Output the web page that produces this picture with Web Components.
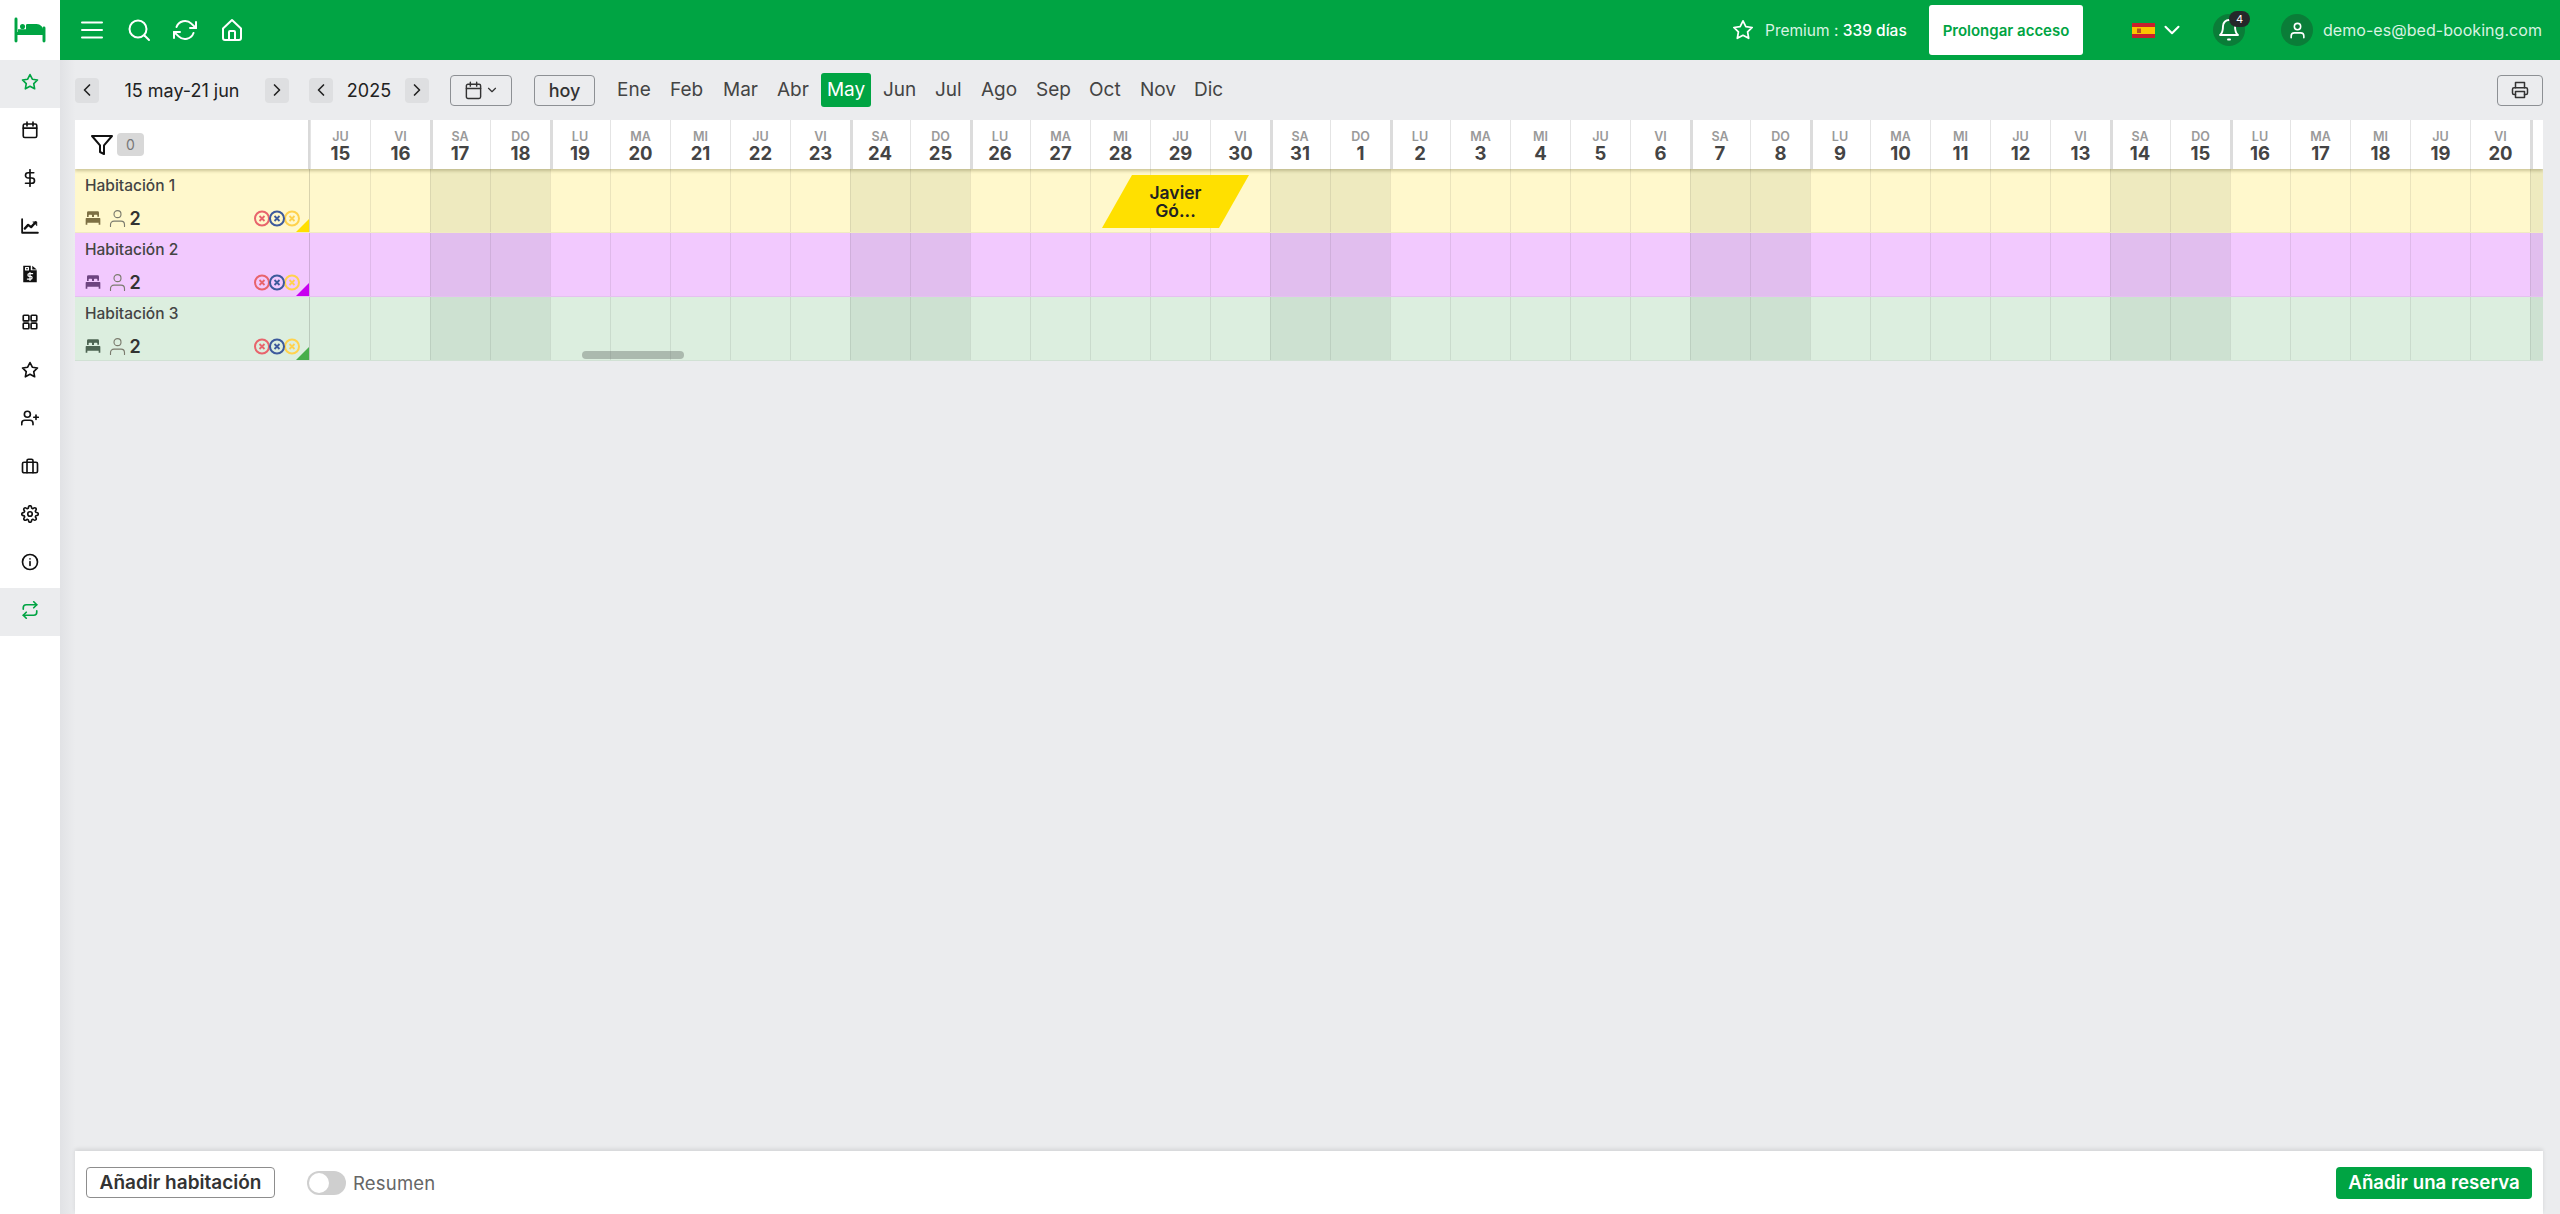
<!DOCTYPE html>
<html lang="es">
<head>
<meta charset="utf-8">
<title>Calendario</title>
<style>
  html, body { margin: 0; height: 100%; overflow: hidden; }
  body { font-family: Inter, "Liberation Sans", sans-serif; color: #222; background: #ebecee; }
</style>
</head>
<body>
<app-shell>
  <side-nav slot="side"></side-nav>
  <top-bar slot="top"></top-bar>
  <cal-toolbar></cal-toolbar>
  <room-grid>
    <room-row name="Habitación 1" color="#fff8cc" bed="#7d7044" mark="#ffdf00">
      <booking-chip left="792" width="147" line1="Javier" line2="Gó..."></booking-chip>
    </room-row>
    <room-row name="Habitación 2" color="#f2c9fe" bed="#6d4480" mark="#c800f0"></room-row>
    <room-row name="Habitación 3" color="#dceedf" bed="#4e6553" mark="#47ae4b"></room-row>
  </room-grid>
  <foot-bar></foot-bar>
</app-shell>

<script>
const ICONS = {
  menu: '<path d="M2 4.5h20M2 12h20M2 19.5h20"/>',
  search: '<circle cx="11" cy="11" r="8.5"/><path d="M17.5 17.5 22 22"/>',
  refresh: '<path d="M23 4v6h-6M1 20v-6h6"/><path d="M3.51 9a9 9 0 0 1 14.85-3.36L23 10M1 14l4.64 4.36A9 9 0 0 0 20.49 15"/>',
  home: '<path d="M3 10.5 12 2l9 8.5V20a2 2 0 0 1-2 2H5a2 2 0 0 1-2-2z"/><path d="M9 22v-8a1 1 0 0 1 1-1h4a1 1 0 0 1 1 1v8"/>',
  star: '<polygon points="12 2 15.09 8.26 22 9.27 17 14.14 18.18 21.02 12 17.77 5.82 21.02 7 14.14 2 9.27 8.91 8.26"/>',
  calendar: '<rect x="3" y="4" width="18" height="18" rx="2"/><path d="M8 1.5v5M16 1.5v5M3 9.5h18"/>',
  dollar: '<path d="M12 1v22M17 5H9.5a3.5 3.5 0 0 0 0 7h5a3.5 3.5 0 0 1 0 7H6"/>',
  chart: '<path d="M1.5 3v18h21" stroke-width="2.4"/><path d="M5 15.5l4.5-5 4 3 6-6.5" stroke-width="3"/><path d="M16 6.5h5v5" fill="currentColor" stroke-width="1"/>',
  grid: '<rect x="3" y="3" width="7.5" height="7.5" rx="1"/><rect x="13.5" y="3" width="7.5" height="7.5" rx="1"/><rect x="3" y="13.5" width="7.5" height="7.5" rx="1"/><rect x="13.5" y="13.5" width="7.5" height="7.5" rx="1"/>',
  userplus: '<path d="M16 21v-2a4 4 0 0 0-4-4H5a4 4 0 0 0-4 4v2"/><circle cx="8.5" cy="7" r="4"/><path d="M20 8v6M17 11h6"/>',
  briefcase: '<rect x="2" y="7" width="20" height="14" rx="2"/><path d="M8 21V5a2 2 0 0 1 2-2h4a2 2 0 0 1 2 2v16"/>',
  gear: '<circle cx="12" cy="12" r="3"/><path d="M19.4 15a1.65 1.65 0 0 0 .33 1.82l.06.06a2 2 0 0 1 0 2.83 2 2 0 0 1-2.83 0l-.06-.06a1.65 1.65 0 0 0-1.82-.33 1.65 1.65 0 0 0-1 1.51V21a2 2 0 0 1-2 2 2 2 0 0 1-2-2v-.09A1.65 1.65 0 0 0 9 19.4a1.65 1.65 0 0 0-1.82.33l-.06.06a2 2 0 0 1-2.83 0 2 2 0 0 1 0-2.83l.06-.06a1.65 1.65 0 0 0 .33-1.82 1.65 1.65 0 0 0-1.51-1H3a2 2 0 0 1-2-2 2 2 0 0 1 2-2h.09A1.65 1.65 0 0 0 4.6 9a1.65 1.65 0 0 0-.33-1.82l-.06-.06a2 2 0 0 1 0-2.83 2 2 0 0 1 2.83 0l.06.06a1.65 1.65 0 0 0 1.82.33H9a1.65 1.65 0 0 0 1-1.51V3a2 2 0 0 1 2-2 2 2 0 0 1 2 2v.09a1.65 1.65 0 0 0 1 1.51 1.65 1.65 0 0 0 1.82-.33l.06-.06a2 2 0 0 1 2.83 0 2 2 0 0 1 0 2.83l-.06.06a1.65 1.65 0 0 0-.33 1.82V9a1.65 1.65 0 0 0 1.51 1H21a2 2 0 0 1 2 2 2 2 0 0 1-2 2h-.09a1.65 1.65 0 0 0-1.51 1z"/>',
  info: '<circle cx="12" cy="12" r="10"/><path d="M12 16.5v-5M12 8v-.1"/>',
  repeat: '<path d="M17 1l4 4-4 4"/><path d="M3 11V9a4 4 0 0 1 4-4h14"/><path d="M7 23l-4-4 4-4"/><path d="M21 13v2a4 4 0 0 1-4 4H3"/>',
  bell: '<path d="M18 8A6 6 0 0 0 6 8c0 7-3 9-3 9h18s-3-2-3-9"/><path d="M11 21.5h2"/>',
  user: '<path d="M20 21v-2a4 4 0 0 0-4-4H8a4 4 0 0 0-4 4v2"/><circle cx="12" cy="7" r="4"/>',
  filter: '<polygon points="22 3 2 3 10 12.46 10 19 14 21 14 12.46 22 3"/>',
  printer: '<path d="M6 9V2h12v7"/><path d="M6 18H4a2 2 0 0 1-2-2v-5a2 2 0 0 1 2-2h16a2 2 0 0 1 2 2v5a2 2 0 0 1-2 2h-2"/><rect x="6" y="14" width="12" height="8"/>',
  left: '<path d="M15 18l-6-6 6-6"/>',
  right: '<path d="M9 18l6-6-6-6"/>',
  down: '<path d="M6 9l6 6 6-6"/>',
  bed: '<path fill="currentColor" stroke="none" d="M5 2h14a2 2 0 0 1 2 2v6h-2.5V8a1 1 0 0 0-1-1h-3a1 1 0 0 0-1 1v2.5h-3V8a1 1 0 0 0-1-1H6.5a1 1 0 0 0-1 1v2.5H3V4a2 2 0 0 1 2-2zM2 12h20a1 1 0 0 1 1 1v9h-2.5v-3h-17v3H1v-9a1 1 0 0 1 1-1z"/>',
  invoice: '<path fill="currentColor" stroke="none" d="M3 1h10v6h8v16H3zM15 1l6 5h-6z"/><path stroke="#fff" stroke-width="1.6" d="M15.5 11.5H11a1.8 1.8 0 0 0 0 3.6h2a1.8 1.8 0 0 1 0 3.6H8.5M12 10v10.5"/><path stroke="#fff" stroke-width="1.4" d="M6 3.5h4v3H6z"/>',
  logo: '<path d="M1.5 3.75v16.5M1.5 14.6h21M22.5 10.5v9.75" stroke-width="2.2"/><circle cx="6.4" cy="9.4" r="1.9" fill="currentColor" stroke="none"/><path d="M9 8.5a1 1 0 0 1 1-1h7a5 5 0 0 1 5 5v2H3v-3h6z" fill="currentColor" stroke="none"/>'
};

class UiIcon extends HTMLElement {
  connectedCallback() {
    const size = this.getAttribute('size') || 24;
    const sw = this.getAttribute('stroke') || 2;
    this.attachShadow({ mode: 'open' }).innerHTML = `
      <style>:host { display: inline-flex; flex: none; line-height: 0; }</style>
      <svg width="${size}" height="${size}" viewBox="0 0 24 24" fill="none" stroke="currentColor"
        stroke-width="${sw}" stroke-linecap="round" stroke-linejoin="round">${ICONS[this.getAttribute('name')]}</svg>`;
  }
}
customElements.define('ui-icon', UiIcon);

class AppShell extends HTMLElement {
  constructor() {
    super();
    this.attachShadow({ mode: 'open' }).innerHTML = `
      <style>
        :host { display: flex; height: 1214px; width: 2560px; }
        .col { flex: 1; min-width: 0; display: flex; flex-direction: column; }
        .content {
          flex: 1; min-height: 0; display: flex; flex-direction: column;
          padding: 0 17px 0 15px;
          background: linear-gradient(to right, #e1e2e5, #ebecee 15px);
        }
        ::slotted(foot-bar) { margin-top: auto; }
      </style>
      <slot name="side"></slot>
      <div class="col">
        <slot name="top"></slot>
        <div class="content"><slot></slot></div>
      </div>`;
  }
}
customElements.define('app-shell', AppShell);

class SideNav extends HTMLElement {
  constructor() {
    super();
    const items = ['star:on', 'calendar', 'dollar', 'chart', 'invoice', 'grid', 'star', 'userplus', 'briefcase', 'gear', 'info', 'repeat:on'];
    const rows = items.map(it => {
      const [name, on] = it.split(':');
      return `<div class="item ${on ? 'on' : ''}"><ui-icon name="${name}" size="18" stroke="2.2"></ui-icon></div>`;
    }).join('');
    this.attachShadow({ mode: 'open' }).innerHTML = `
      <style>
        :host { display: block; width: 60px; flex: none; background: #fff; }
        .logo { height: 60px; display: flex; align-items: center; justify-content: center; color: #00a443; }
        .item { height: 48px; box-sizing: border-box; padding-bottom: 4px; display: flex; align-items: center; justify-content: center; color: #111; }
        .item.on { background: #ebecee; color: #00a443; }
      </style>
      <div class="logo"><ui-icon name="logo" size="32" stroke="2"></ui-icon></div>
      ${rows}`;
  }
}
customElements.define('side-nav', SideNav);

class TopBar extends HTMLElement {
  constructor() {
    super();
    this.attachShadow({ mode: 'open' }).innerHTML = `
      <style>
        :host { display: flex; align-items: center; height: 60px; flex: none; background: #00a443; color: #fff; padding: 0 24px 0 20px; font-size: 16px; }
        .tools { display: flex; gap: 22.5px; }
        .right { margin-left: auto; display: flex; align-items: center; }
        .premium { margin-left: 11px; width: 145px; white-space: nowrap; color: #d8f3e2; font-size: 15.5px; }
        .premium b { font-weight: 500; color: #fff; }
        .extend {
          margin-left: 19px; width: 154px; height: 50px; box-sizing: border-box; display: flex; align-items: center; justify-content: center;
          background: #fff; color: #00a443; border-radius: 3px; font-weight: 600; font-size: 15px; white-space: nowrap;
        }
        .flag { margin-left: 49px; display: block; }
        .chev { margin-left: 4px; }
        .round { position: relative; width: 32px; height: 32px; border-radius: 50%; background: #0a7d38; display: flex; align-items: center; justify-content: center; }
        .bell { margin-left: 28px; }
        .badge {
          position: absolute; left: 16px; top: -3px; width: 21px; height: 16px; border-radius: 8px; background: #25282a;
          color: #fff; font-size: 11px; line-height: 16px; text-align: center;
        }
        .user { margin-left: 36px; }
        .mail { margin-left: 10px; width: 213px; white-space: nowrap; color: #d8f3e2; letter-spacing: .05px; }
      </style>
      <div class="tools">
        <ui-icon name="menu" size="24" stroke="2"></ui-icon>
        <ui-icon name="search" size="24" stroke="2"></ui-icon>
        <ui-icon name="refresh" size="24" stroke="2"></ui-icon>
        <ui-icon name="home" size="24" stroke="2"></ui-icon>
      </div>
      <div class="right">
        <ui-icon name="star" size="22" stroke="1.9"></ui-icon>
        <span class="premium">Premium : <b>339 días</b></span>
        <div class="extend">Prolongar acceso</div>
        <svg class="flag" width="23" height="15" viewBox="0 0 23 15">
          <rect width="23" height="15" fill="#c8202c"/><rect y="4" width="23" height="7" fill="#fbc400"/>
          <rect x="5" y="5.5" width="4" height="4.5" fill="#b5541c"/>
        </svg>
        <ui-icon class="chev" name="down" size="26" stroke="1.9"></ui-icon>
        <div class="round bell">
          <ui-icon name="bell" size="24" stroke="1.9"></ui-icon>
          <span class="badge">4</span>
        </div>
        <div class="round user"><ui-icon name="user" size="19" stroke="2"></ui-icon></div>
        <span class="mail">demo-es@bed-booking.com</span>
      </div>`;
  }
}
customElements.define('top-bar', TopBar);

class CalToolbar extends HTMLElement {
  constructor() {
    super();
    const months = [['Ene', 53], ['Feb', 53], ['Mar', 54], ['Abr', 51], ['May', 50], ['Jun', 52], ['Jul', 46], ['Ago', 55], ['Sep', 53], ['Oct', 51], ['Nov', 54], ['Dic', 43]];
    const tabs = months.map(([m, w]) => `<span class="m ${m === 'May' ? 'on' : ''}" style="width:${w}px">${m}</span>`).join('');
    this.attachShadow({ mode: 'open' }).innerHTML = `
      <style>
        :host { display: flex; align-items: center; height: 60px; flex: none; font-size: 18px; color: #222; }
        .step { width: 24px; height: 25px; border-radius: 4px; background: #dedfe1; display: flex; align-items: center; justify-content: center; color: #222; }
        .label { text-align: center; white-space: nowrap; }
        .range { width: 166px; }
        .year { width: 72px; }
        .outline {
          height: 31px; box-sizing: border-box; border: 1px solid #8d9094; border-radius: 4px; display: flex; align-items: center; justify-content: center; color: #333;
        }
        .cal { width: 62px; margin-left: 21px; gap: 2px; }
        .hoy { width: 61px; margin-left: 22px; font-weight: 500; font-size: 18px; }
        .months { display: flex; align-items: center; margin-left: 15px; color: #444; font-size: 19px; }
        .m { height: 34px; line-height: 34px; padding-left: 7px; box-sizing: border-box; flex: none; border-radius: 3px; }
        .m.on { background: #00a443; color: #fff; margin: 0 5px 0 0; padding-left: 0; text-align: center; }
        .print { width: 46px; margin-left: auto; }
        .gap { width: 20px; }
      </style>
      <span class="step"><ui-icon name="left" size="20" stroke="2"></ui-icon></span>
      <span class="label range">15 may-21 jun</span>
      <span class="step"><ui-icon name="right" size="20" stroke="2"></ui-icon></span>
      <span class="gap"></span>
      <span class="step"><ui-icon name="left" size="20" stroke="2"></ui-icon></span>
      <span class="label year">2025</span>
      <span class="step"><ui-icon name="right" size="20" stroke="2"></ui-icon></span>
      <div class="outline cal"><ui-icon name="calendar" size="19" stroke="1.8"></ui-icon><ui-icon name="down" size="14" stroke="2"></ui-icon></div>
      <div class="outline hoy">hoy</div>
      <div class="months">${tabs}</div>
      <div class="outline print"><ui-icon name="printer" size="18" stroke="2"></ui-icon></div>`;
  }
}
customElements.define('cal-toolbar', CalToolbar);

const DAY_COUNT = 38; // 15 may to 21 jun, only a sliver of the last one shows at the grid edge
const DAY_NAMES = ['DO', 'LU', 'MA', 'MI', 'JU', 'VI', 'SA'];
function dayInfo(i) {
  const d = new Date(2025, 4, 15 + i);
  const dow = d.getDay();
  return { name: DAY_NAMES[dow], num: d.getDate(), weekend: dow === 0 || dow === 6, sat: dow === 6, mon: dow === 1 };
}

class RoomGrid extends HTMLElement {
  constructor() {
    super();
    let heads = '';
    for (let i = 0; i < DAY_COUNT; i++) {
      const d = dayInfo(i);
      const labels = i < DAY_COUNT - 1 ? `<span class="n">${d.name}</span><span class="d">${d.num}</span>` : '';
      heads += `<div class="day ${d.sat || d.mon ? 'thick' : ''}">${labels}</div>`;
    }
    this.attachShadow({ mode: 'open' }).innerHTML = `
      <style>
        :host { display: block; position: relative; flex: none; overflow: hidden; }
        .head { display: flex; height: 49px; background: #fff; position: relative; z-index: 2; box-shadow: 0 2px 3px rgba(90,80,30,.3); }
        .corner { width: 235px; flex: none; box-sizing: border-box; display: flex; align-items: center; padding-left: 15px; gap: 3px; border-right: 2px solid #d9d9d9; color: #111; }
        .count { width: 27px; height: 23px; border-radius: 4px; background: #d8d8d8; color: #777; font-size: 14px; display: flex; align-items: center; justify-content: center; }
        .day { width: 60px; flex: none; box-sizing: border-box; border-left: 1px solid #e4e4e4; display: flex; flex-direction: column; align-items: center; padding-top: 10px; }
        .day:first-of-type { border-left: 0; }
        .day.thick { border-left: 0; box-shadow: inset 3px 0 0 #dcdcdc; }
        .n { font-size: 12.5px; font-weight: 600; color: #9a9a9a; line-height: 14px; }
        .d { font-size: 18.5px; font-weight: 700; color: #444; line-height: 18px; }
        .thumb { position: absolute; left: 507px; top: 231px; width: 102px; height: 8px; border-radius: 4px; background: rgba(110,120,115,.45); z-index: 3; }
      </style>
      <div class="head">
        <div class="corner"><ui-icon name="filter" size="24" stroke="2"></ui-icon><span class="count">0</span></div>
        ${heads}
      </div>
      <slot></slot>
      <div class="thumb"></div>`;
  }
}
customElements.define('room-grid', RoomGrid);

class RoomRow extends HTMLElement {
  connectedCallback() {
    let cells = '';
    for (let i = 0; i < DAY_COUNT; i++) {
      cells += `<div class="cell ${dayInfo(i).weekend ? 'wk' : ''}"></div>`;
    }
    const mark = this.getAttribute('mark');
    const cross = (cx, col) => `<circle cx="${cx}" cy="8.5" r="7" fill="none" stroke="${col}" stroke-width="2"/>
      <path d="M${cx - 2.5} 6l5 5M${cx + 2.5} 6l-5 5" stroke="${col}" stroke-width="1.8"/>`;
    this.attachShadow({ mode: 'open' }).innerHTML = `
      <style>
        :host { display: flex; height: 64px; background: ${this.getAttribute('color')}; position: relative; box-sizing: border-box; border-bottom: 1px solid rgba(120,120,120,.1); }
        .info { width: 235px; flex: none; box-sizing: border-box; position: relative; padding-left: 10px; border-right: 1px solid rgba(0,0,0,.15); color: #444; }
        .name { font-size: 15.5px; font-weight: 500; line-height: 20px; margin-top: 7px; }
        .meta { display: flex; align-items: center; margin-top: 12px; height: 20px; }
        .bed { color: ${this.getAttribute('bed')}; }
        .guest { color: #7b7b6e; margin-left: 6px; }
        .num { margin-left: 1.5px; font-size: 18px; font-weight: 600; color: #333; }
        .rules { position: absolute; left: 178px; top: 41px; }
        .mark { position: absolute; right: 0; bottom: 0; width: 13px; height: 13px; background: ${mark}; clip-path: polygon(100% 0, 100% 100%, 0 100%); }
        .days { display: flex; flex: none; position: relative; }
        .cell { width: 60px; flex: none; box-sizing: border-box; border-left: 1px solid rgba(0,0,0,.08); }
        .cell:first-child { border-left: 0; }
        .wk { background: rgba(20,50,30,.07); }
      </style>
      <div class="info">
        <div class="name">${this.getAttribute('name')}</div>
        <div class="meta">
          <ui-icon class="bed" name="bed" size="16"></ui-icon>
          <ui-icon class="guest" name="user" size="21" stroke="1.3"></ui-icon>
          <span class="num">2</span>
        </div>
        <svg class="rules" width="48" height="17" viewBox="0 0 48 17">
          ${cross(9, '#e8646c')}${cross(39, '#ffd24d')}${cross(24, '#3d5a9c')}
        </svg>
        <span class="mark"></span>
      </div>
      <div class="days">${cells}<slot></slot></div>`;
  }
}
customElements.define('room-row', RoomRow);

class BookingChip extends HTMLElement {
  connectedCallback() {
    this.attachShadow({ mode: 'open' }).innerHTML = `
      <style>
        :host {
          position: absolute; top: 6px; left: ${this.getAttribute('left')}px; width: ${this.getAttribute('width')}px; height: 53px;
          background: #ffe000; clip-path: polygon(20.4% 0, 100% 0, 79.6% 100%, 0 100%);
          display: flex; flex-direction: column; align-items: center; justify-content: center;
          font-size: 17.5px; font-weight: 600; line-height: 17.5px; color: #222;
        }
      </style>
      <span>${this.getAttribute('line1')}</span><span>${this.getAttribute('line2')}</span>`;
  }
}
customElements.define('booking-chip', BookingChip);

class FootBar extends HTMLElement {
  constructor() {
    super();
    this.attachShadow({ mode: 'open' }).innerHTML = `
      <style>
        :host { display: flex; align-items: center; height: 63px; flex: none; background: #fff; padding: 0 11px; box-shadow: 0 -2px 4px rgba(0,0,0,.1); font-size: 18.5px; }
        .add { width: 189px; height: 31px; box-sizing: border-box; border: 1px solid #8d8d8d; border-radius: 4px; display: flex; align-items: center; justify-content: center; font-weight: 600; color: #333; white-space: nowrap; font-size: 19px; }
        .toggle { margin-left: 32px; width: 39px; height: 24px; border-radius: 12px; background: #cfcfcf; position: relative; flex: none; }
        .toggle::before { content: ""; position: absolute; left: 2px; top: 2px; width: 20px; height: 20px; border-radius: 50%; background: #fff; }
        .sum { margin-left: 7px; color: #666; letter-spacing: .2px; }
        .book { margin-left: auto; width: 196px; height: 32px; border-radius: 4px; background: #00a443; color: #fff; display: flex; align-items: center; justify-content: center; font-weight: 600; white-space: nowrap; font-size: 18.7px; }
      </style>
      <div class="add">Añadir habitación</div>
      <span class="toggle"></span>
      <span class="sum">Resumen</span>
      <div class="book">Añadir una reserva</div>`;
  }
}
customElements.define('foot-bar', FootBar);
</script>
</body>
</html>
